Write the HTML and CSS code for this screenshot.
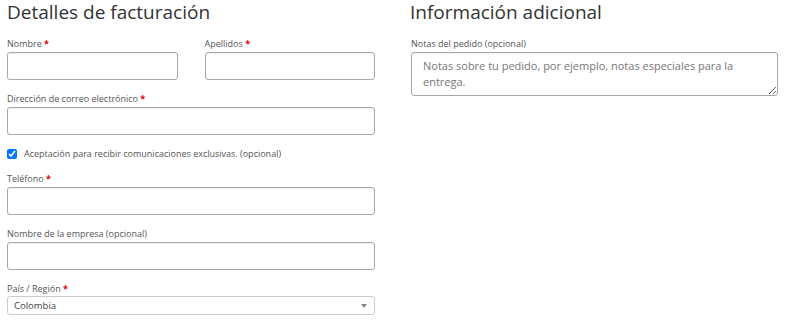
FILE: index.html
```html
<!DOCTYPE html>
<html>
<head>
<meta charset="UTF-8">
<title>Finalizar compra</title>
<link rel="stylesheet" href="styles.css">
</head>
<body>
<div class="checkout">
	<div class="billing">
		<h3>Detalles de facturación</h3>
		<div class="row-pair">
			<p class="field">
				<label for="billing_first_name">Nombre <abbr class="required">*</abbr></label>
				<input type="text" class="input-text" id="billing_first_name">
			</p>
			<p class="field">
				<label for="billing_last_name">Apellidos <abbr class="required">*</abbr></label>
				<input type="text" class="input-text" id="billing_last_name">
			</p>
		</div>
		<p class="field">
			<label for="billing_email">Dirección de correo electrónico <abbr class="required">*</abbr></label>
			<input type="email" class="input-text" id="billing_email">
		</p>
		<p class="field checkbox-field">
			<input type="checkbox" id="optin" checked>
			<label for="optin">Aceptación para recibir comunicaciones exclusivas. (opcional)</label>
		</p>
		<p class="field">
			<label for="billing_phone">Teléfono <abbr class="required">*</abbr></label>
			<input type="tel" class="input-text" id="billing_phone">
		</p>
		<p class="field">
			<label for="billing_company">Nombre de la empresa (opcional)</label>
			<input type="text" class="input-text" id="billing_company">
		</p>
		<p class="field">
			<label for="billing_country">País / Región <abbr class="required">*</abbr></label>
			<span class="select-box" id="billing_country">
				<span class="select-value">Colombia</span>
				<span class="select-arrow"></span>
			</span>
		</p>
	</div>
	<div class="additional">
		<h3>Información adicional</h3>
		<p class="field">
			<label for="order_comments">Notas del pedido (opcional)</label>
			<textarea id="order_comments" class="input-text notes" placeholder="Notas sobre tu pedido, por ejemplo, notas especiales para la entrega."></textarea>
		</p>
	</div>
</div>
</body>
</html>
```

FILE: styles.css
```css
body {
	font-family: "Open Sans", "Noto Sans", sans-serif;
	margin: 0;
	padding: 0;
	background: #FFFFFF;
	color: #555555;
}

.checkout {
	display: grid;
	grid-template-columns: 368px 368px;
	column-gap: 35px;
	padding-left: 7px;
}

h3 {
	font-size: 19px;
	font-weight: 400;
	line-height: 25px;
	color: #333333;
	margin: 0 0 12px 0;
}

.row-pair {
	display: grid;
	grid-template-columns: 1fr 1fr;
	column-gap: 27px;
}

.field {
	margin: 0 0 12px 0;
}

.field label {
	display: block;
	font-size: 9px;
	line-height: 14px;
	margin-bottom: 1px;
	color: #555555;
}

abbr.required {
	color: #E00000;
	font-weight: 700;
	text-decoration: none;
	border: none;
}

.input-text {
	display: block;
	box-sizing: border-box;
	width: 100%;
	height: 28px;
	margin: 0;
	border: 1px solid #A8A8A8;
	border-radius: 3px;
	background: #FFFFFF;
	box-shadow: inset 0 1px 1px rgba(0, 0, 0, 0.06);
}

.checkbox-field {
	display: flex;
	align-items: center;
	height: 13px;
}

.checkbox-field input {
	width: 10px;
	height: 10px;
	margin: 0 7px 0 0;
}

.checkbox-field label {
	margin: 0;
}

.select-box {
	display: flex;
	align-items: center;
	justify-content: space-between;
	box-sizing: border-box;
	height: 19px;
	margin-top: -1px;
	border: 1px solid #CCCCCC;
	border-radius: 3px;
	padding: 0 7px 0 6px;
	font-size: 9.5px;
	color: #444444;
}

.select-arrow {
	width: 0;
	height: 0;
	border-left: 3px solid transparent;
	border-right: 3px solid transparent;
	border-top: 4px solid #888888;
}

.additional .field {
	margin-left: 1px;
}

textarea.notes {
	height: 44px;
	padding: 5px 11px;
	font-family: "Open Sans", "Noto Sans", sans-serif;
	font-size: 11px;
	line-height: 16px;
	resize: vertical;
}

textarea.notes::placeholder {
	color: #777777;
}
```
